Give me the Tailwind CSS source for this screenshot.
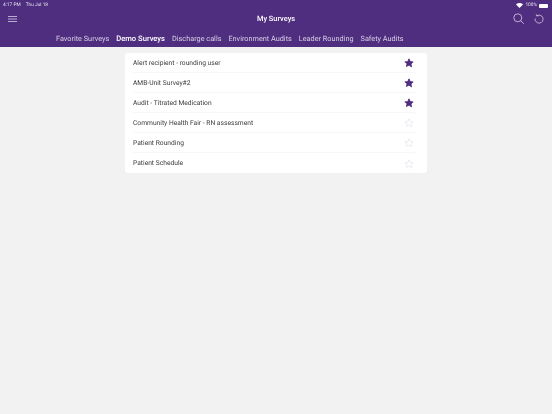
<!DOCTYPE html>
<html lang="en">
<head>
    <meta charset="UTF-8">
    <title>My Surveys</title>
    <script src="https://cdn.jsdelivr.net/npm/@tailwindcss/browser@4"></script>
</head>
<body class="w-[552px] h-[414px] overflow-hidden bg-[#f2f2f2] font-['Roboto','Liberation_Sans',sans-serif] [text-rendering:geometricPrecision]">

    <!-- Header -->
    <header class="h-[47px] bg-[#4f2d7f] flex flex-col">
        <div class="h-[9px] pt-[2px] flex items-center justify-between pl-[3px] pr-[4px] text-[4.8px] leading-[7px] text-[#e8e2f0]">
            <div class="flex gap-[5px] blur-[0.2px]"><span>4:17 PM</span><span>Thu Jul 18</span></div>
            <div class="flex items-center gap-[2px]">
                <svg width="7" height="5" viewBox="0 0 14 10" fill="white"><path d="M7 10 0 3a10 10 0 0 1 14 0z"/></svg>
                <span class="blur-[0.2px]">100%</span>
                <div class="w-[9px] h-[4px] bg-white rounded-[1px]"></div>
            </div>
        </div>
        <div class="h-[19px] grid grid-cols-3 items-center pl-[8px] pr-[8px] text-white">
            <svg width="10" height="6" viewBox="0 0 10 6" stroke="#d9d0e6" stroke-width="0.8"><path d="M0 .5h9M0 3h9M0 5.500h9"/></svg>
            <div class="text-center text-[7.400px] font-medium blur-[0.2px]">My Surveys</div>
            <div class="flex items-center justify-end gap-[10px]">
                <svg width="11" height="11" viewBox="0 0 11 11" fill="none" stroke="#d9d0e6" stroke-width="0.8"><circle cx="4.800" cy="4.800" r="4"/><path d="m7.800 7.800 3 3"/></svg>
                <svg width="10" height="10" viewBox="0 0 10 10" fill="none" stroke="#d9d0e6" stroke-width="0.8"><path d="M2.800 1.800A4 4 0 1 1 1.100 4.500"/><path d="M2.200.3 2.800 1.900 4.500 1.800"/></svg>
            </div>
        </div>
        <nav class="flex gap-[7px] pl-[56px] mt-[4px] text-[7.300px] leading-[14px] text-[#d9d0e6]">
            <span class="blur-[0.2px]">Favorite Surveys</span>
            <span class="text-white font-medium text-[7.600px] blur-[0.2px]">Demo Surveys</span>
            <span class="blur-[0.2px]">Discharge calls</span>
            <span class="blur-[0.2px]">Environment Audits</span>
            <span class="blur-[0.2px]">Leader Rounding</span>
            <span class="blur-[0.2px]">Safety Audits</span>
        </nav>
    </header>

    <!-- Survey list -->
    <main class="w-[302px] ml-[125px] mt-[6px] bg-white rounded-[3px] text-[6.700px] text-[#3a3a3a]">
        <div class="h-[20px] ml-[8px] mr-[10px] pr-[3px] pt-[1px] flex items-center justify-between border-b border-[#f8f8f8]">
            <span class="blur-[0.2px]">Alert recipient - rounding user</span>
            <svg width="10" height="10" viewBox="0 0 24 24" fill="#4f2d7f" stroke="#4f2d7f" stroke-width="2" stroke-linejoin="round"><path d="m12 2 3 6.600 7 .8-5.200 4.800 1.400 7.200L12 17l-6.200 3.400 1.400-7.200L2 9.400l7-.8z"/></svg>
        </div>
        <div class="h-[20px] ml-[8px] mr-[10px] pr-[3px] pt-[1px] flex items-center justify-between border-b border-[#f8f8f8]">
            <span class="blur-[0.2px]">AMB-Unit Survey#2</span>
            <svg width="10" height="10" viewBox="0 0 24 24" fill="#4f2d7f" stroke="#4f2d7f" stroke-width="2" stroke-linejoin="round"><path d="m12 2 3 6.600 7 .8-5.200 4.800 1.400 7.200L12 17l-6.200 3.400 1.400-7.200L2 9.400l7-.8z"/></svg>
        </div>
        <div class="h-[20px] ml-[8px] mr-[10px] pr-[3px] pt-[1px] flex items-center justify-between border-b border-[#f8f8f8]">
            <span class="blur-[0.2px]">Audit - Titrated Medication</span>
            <svg width="10" height="10" viewBox="0 0 24 24" fill="#4f2d7f" stroke="#4f2d7f" stroke-width="2" stroke-linejoin="round"><path d="m12 2 3 6.600 7 .8-5.200 4.800 1.400 7.200L12 17l-6.200 3.400 1.400-7.200L2 9.400l7-.8z"/></svg>
        </div>
        <div class="h-[20px] ml-[8px] mr-[10px] pr-[3px] pt-[1px] flex items-center justify-between border-b border-[#f8f8f8]">
            <span class="blur-[0.2px]">Community Health Fair - RN assessment</span>
            <svg width="10" height="10" viewBox="0 0 24 24" fill="none" stroke="#e3dfec" stroke-width="1.500" stroke-linejoin="round"><path d="m12 2 3 6.600 7 .8-5.200 4.800 1.400 7.200L12 17l-6.200 3.400 1.400-7.200L2 9.400l7-.8z"/></svg>
        </div>
        <div class="h-[20px] ml-[8px] mr-[10px] pr-[3px] pt-[1px] flex items-center justify-between border-b border-[#f8f8f8]">
            <span class="blur-[0.2px]">Patient Rounding</span>
            <svg width="10" height="10" viewBox="0 0 24 24" fill="none" stroke="#e3dfec" stroke-width="1.500" stroke-linejoin="round"><path d="m12 2 3 6.600 7 .8-5.200 4.800 1.400 7.200L12 17l-6.200 3.400 1.400-7.200L2 9.400l7-.8z"/></svg>
        </div>
        <div class="h-[20px] ml-[8px] mr-[10px] pr-[3px] pt-[1px] flex items-center justify-between">
            <span class="blur-[0.2px]">Patient Schedule</span>
            <svg width="10" height="10" viewBox="0 0 24 24" fill="none" stroke="#e3dfec" stroke-width="1.500" stroke-linejoin="round"><path d="m12 2 3 6.600 7 .8-5.200 4.800 1.400 7.200L12 17l-6.200 3.400 1.400-7.200L2 9.400l7-.8z"/></svg>
        </div>
    </main>

</body>
</html>
